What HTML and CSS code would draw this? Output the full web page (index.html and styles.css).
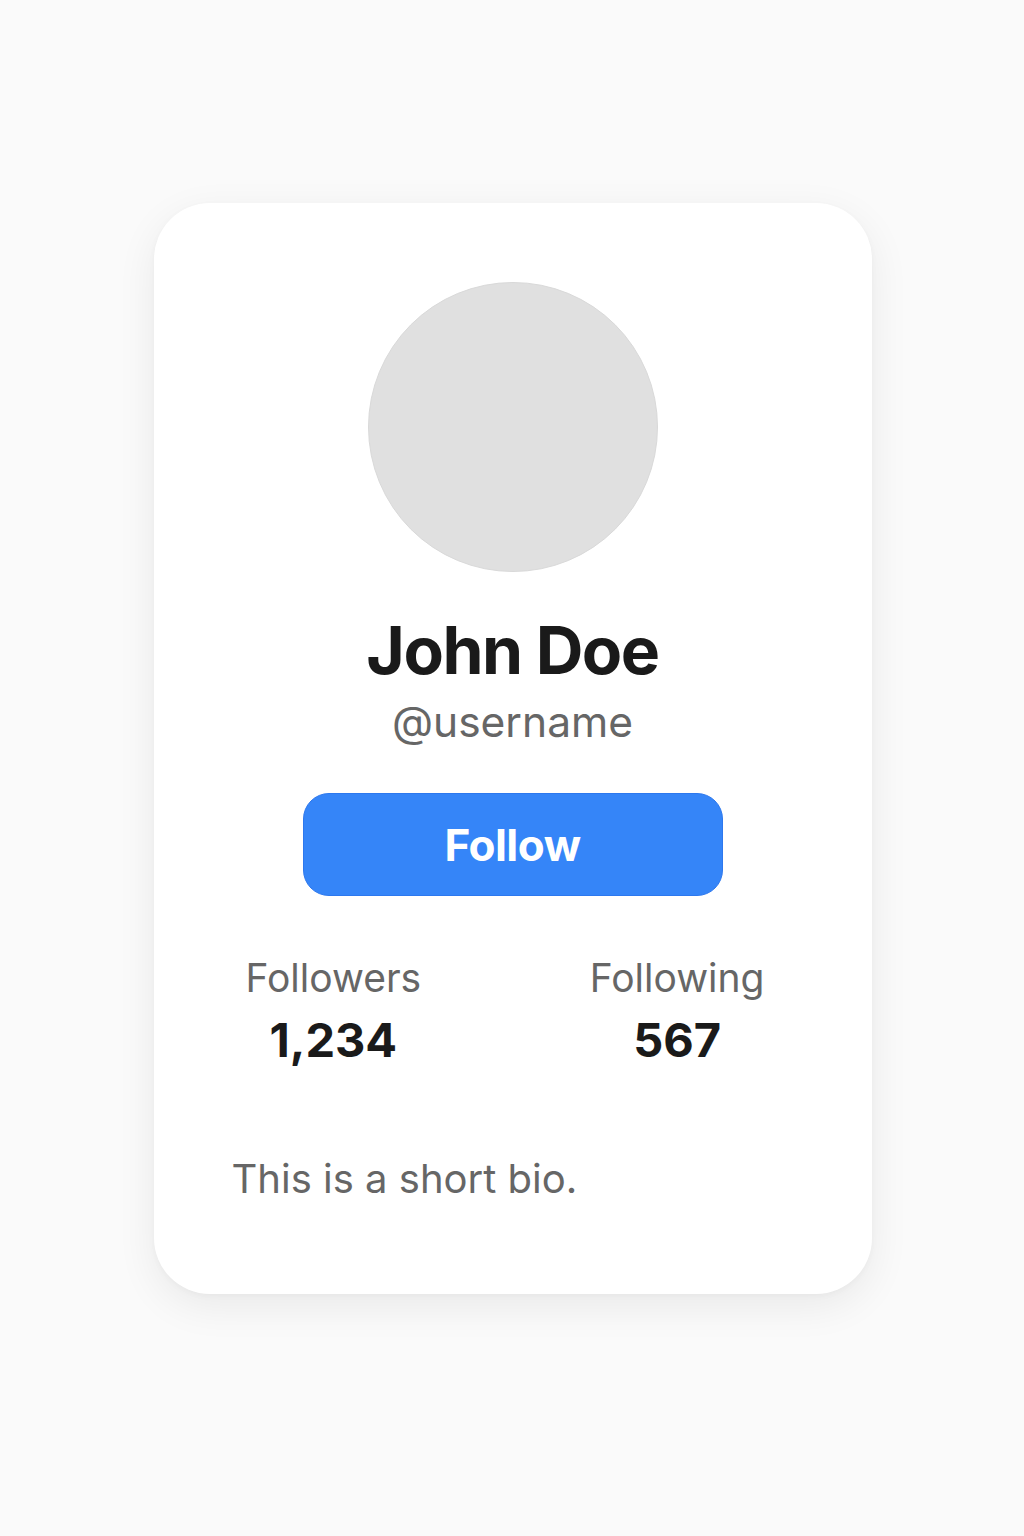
FILE: index.html
```html
<!DOCTYPE html>
<html lang="en">
<head>
<meta charset="utf-8">
<title>Profile</title>
<link rel="stylesheet" href="styles.css">
</head>
<body>
<main class="page">
  <section class="card">
    <div class="avatar"></div>
    <h1 class="name">John Doe</h1>
    <p class="handle">@username</p>
    <button class="follow">Follow</button>
    <div class="stats">
      <div class="stat">
        <span class="stat-label">Followers</span>
        <span class="stat-value">1,234</span>
      </div>
      <div class="stat">
        <span class="stat-label">Following</span>
        <span class="stat-value">567</span>
      </div>
    </div>
    <p class="bio">This is a short bio.</p>
  </section>
</main>
</body>
</html>
```
FILE: styles.css
```css
* { box-sizing: border-box; }
html, body { margin: 0; padding: 0; }
body {
  background: #fafafa;
  font-family: Inter, "Noto Sans", sans-serif;
  width: 1024px;
  height: 1536px;
}
.page {
  display: flex;
  justify-content: center;
  padding: 203px 0 0 1px;
}
.card {
  width: 718px;
  height: 1091px;
  background: #fff;
  border-radius: 56px;
  box-shadow: 0 12px 40px rgba(0,0,0,0.07), 0 2px 6px rgba(0,0,0,0.03);
  display: flex;
  flex-direction: column;
  align-items: center;
  padding: 79px 78px 0;
}
.avatar {
  width: 290px;
  height: 290px;
  border-radius: 50%;
  background: #e0e0e0;
  border: 1px solid #d9d9d9;
  flex: none;
}
.name {
  margin: 38px 0 0;
  font-size: 66px;
  font-weight: 700;
  letter-spacing: -1.5px;
  line-height: 80px;
  color: #1a1a1a;
}
.handle {
  margin: 4px 0 0;
  font-size: 42.5px;
  line-height: 56px;
  color: #666;
}
.follow {
  margin-top: 43px;
  width: 420px;
  height: 103px;
  border-radius: 26px;
  background: #3585f8;
  border: 1px solid #2d78ee;
  color: #fff;
  font-family: inherit;
  font-size: 44px;
  font-weight: 700;
  letter-spacing: -0.5px;
}
.stats {
  margin-top: 57px;
  width: 100%;
  display: flex;
  justify-content: space-between;
  padding: 0 29px 0 14px;
}
.stat {
  display: flex;
  flex-direction: column;
  align-items: center;
  gap: 8px;
}
.stat-label {
  font-size: 39px;
  line-height: 50px;
  color: #666;
}
.stat-value {
  font-size: 47px;
  font-weight: 700;
  line-height: 58px;
  color: #1a1a1a;
}
.bio {
  align-self: stretch;
  margin: 85px 0 0;
  font-size: 40px;
  line-height: 50px;
  color: #666;
}
```
